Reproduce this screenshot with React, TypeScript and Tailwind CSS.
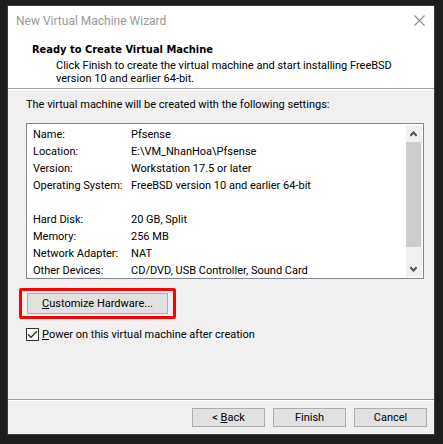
import React from "react";

const settings = [
  ["Name:", "Pfsense"],
  ["Location:", "E:\\VM_NhanHoa\\Pfsense"],
  ["Version:", "Workstation 17.5 or later"],
  ["Operating System:", "FreeBSD version 10 and earlier 64-bit"],
  ["", ""],
  ["Hard Disk:", "20 GB, Split"],
  ["Memory:", "256 MB"],
  ["Network Adapter:", "NAT"],
  ["Other Devices:", "CD/DVD, USB Controller, Sound Card"],
];

function WizardButton({ children }: { children: React.ReactNode }) {
  return (
    <button type="button" className="flex h-[19px] w-[73px] items-center justify-center border border-[#adadad] bg-[#e1e1e1]">
      {children}
    </button>
  );
}

function SettingsScrollbar() {
  return (
    <div className="flex w-4 shrink-0 flex-col bg-[#f0f0f0] pr-px">
      <button type="button" aria-label="Scroll up" className="flex h-[17px] items-center justify-center">
        <svg width="7" height="6" viewBox="0 0 7 6" fill="none" stroke="#555" strokeWidth="2.2">
          <path d="M0.3 4.7L3.5 1.5L6.7 4.7" />
        </svg>
      </button>
      <div className="h-[105px] bg-[#cdcdcd]" />
      <button type="button" aria-label="Scroll down" className="mt-auto flex h-[17px] items-center justify-center">
        <svg width="7" height="6" viewBox="0 0 7 6" fill="none" stroke="#555" strokeWidth="2.2">
          <path d="M0.3 1.3L3.5 4.5L6.7 1.3" />
        </svg>
      </button>
    </div>
  );
}

export default function App() {
  return (
    <div className="flex min-h-screen flex-col bg-[#1e1e1e] pt-[5px] pr-2 pb-[9px] pl-[7px] font-['Roboto','Noto_Sans',sans-serif] text-[11px] leading-[13px] text-black">
      <main className="flex flex-1 flex-col border border-[#3c3c3c] bg-[#f0f0f0]">
        <header className="border-b border-[#a0a0a0] bg-white pb-[3px]">
          <div className="flex h-[29px] items-center justify-between pr-[9px] pl-2">
            <span className="pt-[2px] text-[12px] text-[#999999]">New Virtual Machine Wizard</span>
            <button type="button" aria-label="Close">
              <svg width="11" height="11" viewBox="0 0 11 11" stroke="#8c8c8c" strokeWidth="1.1">
                <path d="M0.5 0.5L10.5 10.5M10.5 0.5L0.5 10.5" />
              </svg>
            </button>
          </div>
          <div className="pt-2 pr-[30px] pl-6">
            <h1 className="font-['DejaVu_Sans_Condensed','DejaVu_Sans',sans-serif] font-bold">Ready to Create Virtual Machine</h1>
            <p className="mt-[3px] pl-6">
              Click Finish to create the virtual machine and start installing FreeBSD version 10 and earlier 64-bit.
            </p>
          </div>
        </header>

        <section className="flex flex-1 flex-col items-start border-t border-white pt-2 pr-[10px] pl-[18px]">
          <p>The virtual machine will be created with the following settings:</p>
          <div className="mt-3 flex h-[156px] w-full justify-between border border-[#828790] bg-white py-px pr-px pl-[6px]">
            <table className="mt-px border-collapse self-start">
              <tbody>
                {settings.map(([label, value], i) => (
                  <tr key={i} className="h-[17px]">
                    <th scope="row" className="w-[98px] p-0 text-left font-normal whitespace-nowrap">{label}</th>
                    <td className="p-0 whitespace-nowrap">{value}</td>
                  </tr>
                ))}
              </tbody>
            </table>
            <SettingsScrollbar />
          </div>
          <div className="mt-[9px] -ml-[7px] rounded-[2px] border-[3px] border-[#ff0000] px-[5px] py-[2px]">
            <button type="button" className="flex h-[21px] w-[141px] items-center justify-center border border-[#adadad] bg-[#e1e1e1]">
              <span><span className="underline">C</span>ustomize Hardware...</span>
            </button>
          </div>
          <label className="mt-[9px] flex items-center gap-[3px]">
            <span className="grid">
              <input type="checkbox" defaultChecked className="peer col-start-1 row-start-1 size-[13px] appearance-none border border-[#333333] bg-white" />
              <svg className="pointer-events-none invisible col-start-1 row-start-1 size-[13px] peer-checked:visible" viewBox="0 0 13 13" fill="none" stroke="#333333" strokeWidth="1.4">
                <path d="M2 6.5L5 9.3L11 3.3" />
              </svg>
            </span>
            <span><span className="underline">P</span>ower on this virtual machine after creation</span>
          </label>
        </section>

        <footer className="border-t border-[#a0a0a0]">
          <div className="flex justify-end gap-2 border-t border-white p-[7px]">
            <WizardButton><span>&lt; <span className="underline">B</span>ack</span></WizardButton>
            <WizardButton>Finish</WizardButton>
            <WizardButton>Cancel</WizardButton>
          </div>
        </footer>
      </main>
    </div>
  );
}
